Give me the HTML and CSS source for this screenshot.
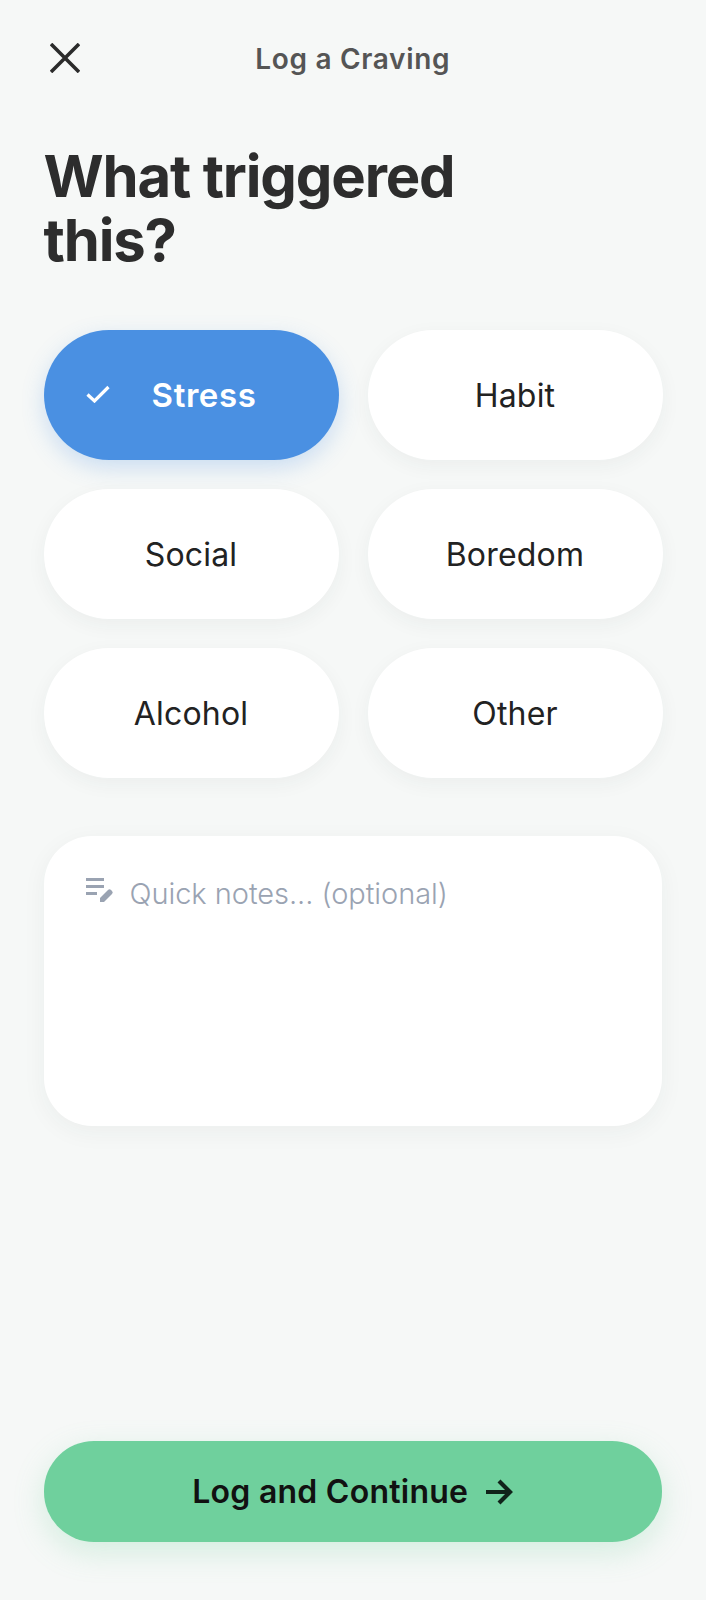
FILE: index.html
```html
<!DOCTYPE html>
<html lang="en">
<head>
<meta charset="utf-8">
<title>Log a Craving</title>
<link rel="stylesheet" href="styles.css">
</head>
<body>
<main class="screen">
  <header class="topbar">
    <svg class="close" viewBox="0 0 30 30" width="30" height="30"><path d="M1 1 L29 29 M29 1 L1 29" fill="none" stroke="#2b2b2b" stroke-width="3.600"/></svg>
    <span class="topbar-title">Log a Craving</span>
  </header>
  <h1 class="headline">What triggered<br>this?</h1>
  <section class="options">
    <button class="pill pill-on">
      <svg class="check" viewBox="0 0 24 18" width="24" height="18"><path d="M1.500 9.500 L8.500 16 L22.500 2" fill="none" stroke="#fff" stroke-width="3.200"/></svg>
      <span>Stress</span>
    </button>
    <button class="pill">Habit</button>
    <button class="pill">Social</button>
    <button class="pill">Boredom</button>
    <button class="pill">Alcohol</button>
    <button class="pill">Other</button>
  </section>
  <section class="notes">
    <svg class="notes-icon" viewBox="0 0 28 26" width="28" height="26"><path d="M0 1h18v3H0zM0 8h18v3H0zM0 15h11v3H0z" fill="#9aa3b2"/><path d="M14 25v-4l8-8q1.500-1.500 3 0l1 1q1.500 1.500 0 3l-8 8z" fill="#9aa3b2"/></svg>
    <span class="notes-text">Quick notes... (optional)</span>
  </section>
  <div class="spacer"></div>
  <button class="cta">
    <span>Log and Continue</span>
    <svg class="arrow" viewBox="0 0 28 26" width="28" height="26"><path d="M1 13 H25 M14 2 L25 13 L14 24" fill="none" stroke="#10231a" stroke-width="4.200"/></svg>
  </button>
</main>
</body>
</html>
```

FILE: styles.css
```css
* { box-sizing: border-box; }
html, body { margin: 0; padding: 0; }
body { background: #f6f8f7; font-family: Inter, "Noto Sans", sans-serif; }
.screen { width: 706px; height: 1600px; padding: 0 44px 58px 43.500px; display: flex; flex-direction: column; }
.topbar { position: relative; height: 118px; display: flex; align-items: center; justify-content: center; }
.close { position: absolute; left: 6px; top: 43px; }
.topbar-title { font-size: 28px; font-weight: 600; color: #555; letter-spacing: 0.7px; }
.headline { margin: 26px 0 0; font-size: 58px; line-height: 64px; font-weight: 700; color: #2d2d2d; letter-spacing: -1.150px; }
.options { margin-top: 58px; display: grid; grid-template-columns: 295px 295px; column-gap: 29px; row-gap: 29px; }
.pill { position: relative; height: 130px; border: 0; border-radius: 65px; background: #fff; color: #222; font: 400 32px Inter, "Noto Sans", sans-serif; letter-spacing: 0.2px; box-shadow: 0 6px 20px rgba(40, 60, 50, .05); }
.pill-on { background: #4a90e2; color: #fff; font-size: 33px; font-weight: 600; letter-spacing: 0.6px; box-shadow: 0 8px 22px rgba(74, 144, 226, .25); padding-left: 32px; }
.check { position: absolute; left: 42px; top: 55px; }
.notes { margin-top: 58px; height: 290px; border-radius: 48px; background: #fff; box-shadow: 0 6px 24px rgba(40, 60, 50, .05); padding: 39px 42px; display: flex; gap: 16px; align-items: flex-start; }
.notes-icon { margin-top: 2px; flex: none; }
.notes-text { font-size: 29px; line-height: 38px; font-weight: 300; color: #9aa3b2; letter-spacing: -0.05px; }
.spacer { flex: 1; }
.cta { height: 101px; border: 0; border-radius: 50px; background: #6fd09d; color: #111; font: 600 32px Inter, "Noto Sans", sans-serif; letter-spacing: 0.25px; display: flex; align-items: center; justify-content: center; gap: 17px; box-shadow: 0 10px 30px rgba(111, 208, 157, .25); }
```
